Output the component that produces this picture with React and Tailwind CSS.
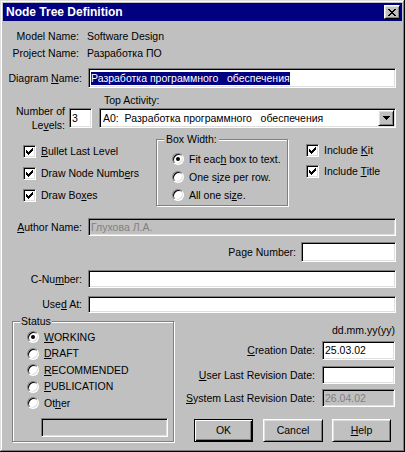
import React from "react";

const sunken =
  "border border-t-[#808080] border-l-[#808080] border-r-white border-b-white shadow-[inset_1px_1px_0_#000,inset_-1px_-1px_0_#dfdfdf]";
const raised =
  "border border-t-white border-l-white border-r-black border-b-black shadow-[inset_1px_1px_0_#dfdfdf,inset_-1px_-1px_0_#808080]";
const etched = "border border-[#808080] shadow-[inset_1px_1px_0_#fff,1px_1px_0_#fff]";

function U({ children }) {
  return <span className="underline decoration-1 underline-offset-[1px]">{children}</span>;
}

function Check({ children }) {
  return (
    <div className="flex items-center">
      <div className={"w-[13px] h-[13px] bg-white flex items-center justify-center " + sunken}>
        <svg width="7" height="7" viewBox="0 0 7 7">
          <path d="M0 2h1v1h1v1h1V3h1V2h1V1h1V0h1v3H6v1H5v1H4v1H3v1H2V6H1V5H0z" fill="#000" />
        </svg>
      </div>
      <span className="ml-[5px]">{children}</span>
    </div>
  );
}

function Radio({ checked, children, gap = "ml-[5px]" }) {
  return (
    <div className="flex items-center">
      <div
        className={
          "w-[12px] h-[12px] rounded-full bg-white flex items-center justify-center border border-t-[#808080] border-l-[#808080] border-r-white border-b-white shadow-[inset_1px_1px_0_#000,inset_-1px_-1px_0_#dfdfdf]"
        }
      >
        {checked && <div className="w-[4px] h-[4px] rounded-full bg-black" />}
      </div>
      <span className={gap}>{children}</span>
    </div>
  );
}

export default function App() {
  return (
    <div className="w-[405px] h-[452px] bg-[#c0c0c0] flex flex-col text-black text-[10.5px] leading-[13px] font-[Liberation_Sans,Arial,sans-serif] shadow-[inset_-1px_-1px_0_#000,inset_1px_1px_0_#dfdfdf,inset_-2px_-2px_0_#808080,inset_2px_2px_0_#fff] overflow-hidden">
      {/* Title bar */}
      <div className="mx-[3px] mt-[3px] h-[18px] bg-[#000080] flex items-center justify-between pl-[3px] pr-[2px]">
        <span className="text-white font-bold text-[12px] leading-[14px]">Node Tree Definition</span>
        <div className={"w-[16px] h-[14px] bg-[#c0c0c0] flex items-center justify-center " + raised}>
          <svg width="8" height="7" viewBox="0 0 8 7">
            <path
              d="M0 0h2v1h1v1h2V1h1V0h2v1H7v1H6v1H5v1h1v1h1v1h1v1H6V6H5V5H3v1H2v1H0V6h1V5h1V4h1V3H2V2H1V1H0z"
              fill="#000"
            />
          </svg>
        </div>
      </div>

      {/* Model name */}
      <div className="mt-[7px] h-[16px] flex items-center">
        <span className="w-[79px] text-right">Model Name:</span>
        <span className="ml-[8px]">Software Design</span>
      </div>
      <div className="mt-[1px] h-[16px] flex items-center">
        <span className="w-[79px] text-right">Project Name:</span>
        <span className="ml-[8px]">Разработка ПО</span>
      </div>

      {/* Diagram name */}
      <div className="mt-[7px] h-[20px] flex items-center">
        <span className="w-[82px] text-right">
          Diagram <U>N</U>ame:
        </span>
        <div className={"ml-[6px] w-[308px] h-[20px] bg-white flex items-center pl-[2px] " + sunken}>
          <span className="bg-[#000080] text-white whitespace-pre">Разработка программного   обеспечения</span>
        </div>
      </div>

      {/* Levels + Top activity */}
      <div className="mt-[5px] h-[35px] flex">
        <div className="w-[99px] flex items-start pt-[11px]">
          <div className="w-[65px] text-right leading-[14px]">
            Number of
            <br />
            Le<U>v</U>els:
          </div>
          <div className={"ml-[4px] mt-[4px] w-[23px] h-[20px] bg-white flex items-center pl-[2px] " + sunken}>3</div>
        </div>
        <div className="flex flex-col">
          <div className="h-[15px] pl-[5px] flex items-center">Top Activity:</div>
          <div className={"w-[297px] h-[20px] bg-white flex items-center p-[1px] " + sunken}>
            <span className="flex-1 pl-[2px] whitespace-pre">A0:  Разработка программного   обеспечения</span>
            <div className={"w-[16px] h-[16px] bg-[#c0c0c0] flex items-center justify-center " + raised}>
              <svg width="7" height="4" viewBox="0 0 7 4">
                <path d="M0 0h7v1H6v1H5v1H4v1H3V3H2V2H1V1H0z" fill="#000" />
              </svg>
            </div>
          </div>
        </div>
      </div>

      {/* Options */}
      <div className="h-[78px] flex">
        <div className="ml-[23px] w-[133px] pt-[12px] flex flex-col">
          <div className="h-[22px] flex items-center">
            <Check>
              <U>B</U>ullet Last Level
            </Check>
          </div>
          <div className="h-[22px] flex items-center">
            <Check>
              Draw Node Numb<U>e</U>rs
            </Check>
          </div>
          <div className="h-[22px] flex items-center">
            <Check>
              Draw Bo<U>x</U>es
            </Check>
          </div>
        </div>
        <div className={"relative mt-[11px] w-[132px] h-[67px] pt-[10px] pl-[15px] " + etched}>
          <span className="absolute left-[7px] -top-[7px] px-[2px] bg-[#c0c0c0]">Box Width:</span>
          <div className="h-[18px] flex items-center">
            <Radio checked>
              Fit eac<U>h</U> box to text.
            </Radio>
          </div>
          <div className="h-[18px] flex items-center">
            <Radio>
              One s<U>i</U>ze per row.
            </Radio>
          </div>
          <div className="h-[18px] flex items-center">
            <Radio>
              All one si<U>z</U>e.
            </Radio>
          </div>
        </div>
        <div className="ml-[18px] pt-[12px] flex flex-col">
          <div className="h-[21px] flex items-center">
            <Check>
              Include <U>K</U>it
            </Check>
          </div>
          <div className="h-[21px] flex items-center">
            <Check>
              Include <U>T</U>itle
            </Check>
          </div>
        </div>
      </div>

      {/* Author */}
      <div className="mt-[12px] h-[18px] flex items-center">
        <span className="w-[82px] text-right">
          <U>A</U>uthor Name:
        </span>
        <div className={"ml-[6px] w-[308px] h-[18px] bg-[#c0c0c0] text-[#808080] flex items-center pl-[2px] " + sunken}>
          Глухова Л.А.
        </div>
      </div>

      {/* Page number */}
      <div className="mt-[6px] h-[20px] flex items-center justify-end pr-[9px]">
        <span>Page Number:</span>
        <div className={"ml-[5px] w-[95px] h-[20px] bg-white " + sunken}></div>
      </div>

      {/* C-Number */}
      <div className="mt-[8px] h-[18px] flex items-center">
        <span className="w-[82px] text-right">
          C-Nu<U>m</U>ber:
        </span>
        <div className={"ml-[6px] w-[308px] h-[18px] bg-white " + sunken}></div>
      </div>

      {/* Used At */}
      <div className="mt-[8px] h-[17px] flex items-center">
        <span className="w-[82px] text-right">
          Use<U>d</U> At:
        </span>
        <div className={"ml-[6px] w-[308px] h-[17px] bg-white " + sunken}></div>
      </div>

      {/* Bottom section */}
      <div className="flex">
        <div className={"relative ml-[12px] mt-[8px] w-[162px] h-[121px] pt-[7px] pl-[14px] " + etched}>
          <span className="absolute left-[7px] -top-[7px] px-[1px] bg-[#c0c0c0]">Status</span>
          <div className="h-[16.5px] flex items-center">
            <Radio checked>
              <U>W</U>ORKING
            </Radio>
          </div>
          <div className="h-[16.5px] flex items-center">
            <Radio>
              <U>D</U>RAFT
            </Radio>
          </div>
          <div className="h-[16.5px] flex items-center">
            <Radio>
              <U>R</U>ECOMMENDED
            </Radio>
          </div>
          <div className="h-[16.5px] flex items-center">
            <Radio>
              <U>P</U>UBLICATION
            </Radio>
          </div>
          <div className="h-[16.5px] flex items-center">
            <Radio>
              Ot<U>h</U>er
            </Radio>
          </div>
          <div className={"mt-[6px] ml-[14px] w-[127px] h-[19px] bg-[#c0c0c0] " + sunken}></div>
        </div>

        <div className="flex-1 flex flex-col items-end pr-[10px]">
          <div className="mt-[10px] h-[14px] flex items-center">dd.mm.yy(yy)</div>
          <div className="mt-[4px] h-[19px] flex items-center">
            <span>
              <U>C</U>reation Date:
            </span>
            <div className={"ml-[7px] w-[73px] h-[19px] bg-white flex items-center pl-[2px] " + sunken}>25.03.02</div>
          </div>
          <div className="mt-[6px] h-[18px] flex items-center">
            <span>
              <U>U</U>ser Last Revision Date:
            </span>
            <div className={"ml-[7px] w-[73px] h-[18px] bg-white " + sunken}></div>
          </div>
          <div className="mt-[5px] h-[18px] flex items-center">
            <span>
              <U>S</U>ystem Last Revision Date:
            </span>
            <div className={"ml-[7px] w-[73px] h-[18px] bg-[#c0c0c0] text-[#808080] flex items-center pl-[2px] " + sunken}>
              26.04.02
            </div>
          </div>
          <div className="mt-[12px] self-start ml-[20px] flex">
            <div className="w-[59px] h-[23px] flex items-center justify-center border border-black shadow-[inset_1px_1px_0_#fff,inset_-1px_-1px_0_#000,inset_-2px_-2px_0_#808080]">
              OK
            </div>
            <div className={"ml-[10px] w-[60px] h-[23px] flex items-center justify-center " + raised}>Cancel</div>
            <div className={"ml-[9px] w-[59px] h-[23px] flex items-center justify-center " + raised}>
              <span>
                <U>H</U>elp
              </span>
            </div>
          </div>
        </div>
      </div>
    </div>
  );
}
